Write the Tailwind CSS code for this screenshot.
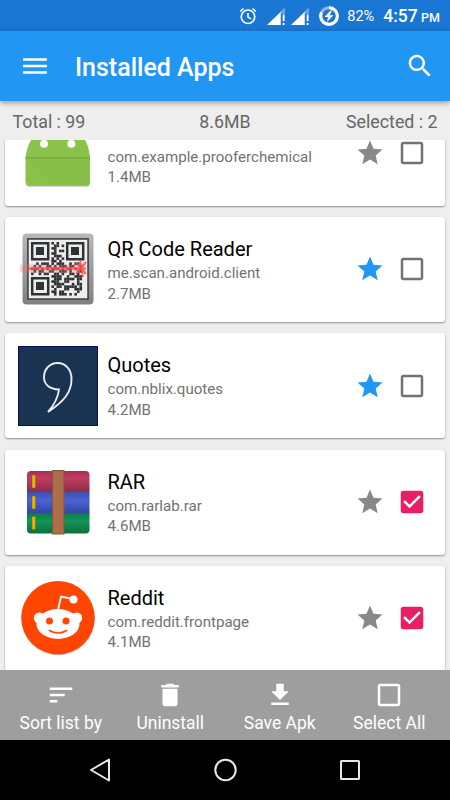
<!DOCTYPE html>
<html lang="en">
<head>
  <meta charset="UTF-8">
  <meta name="viewport" content="width=device-width, initial-scale=1.0">
  <script src="https://cdn.jsdelivr.net/npm/@tailwindcss/browser@4"></script>
  <title>Installed Apps</title>
</head>
<body class="font-['Roboto',sans-serif]">

  <!-- shared icons -->
  <svg class="hidden">
    <symbol id="star" viewBox="0 0 24 24"><path d="M12 17.27L18.18 21l-1.64-7.03L22 9.24l-7.19-.61L12 2 9.19 8.63 2 9.24l5.46 4.73L5.82 21z"/></symbol>
    <symbol id="box" viewBox="0 0 24 24"><path d="M19 5v14H5V5h14m0-2H5c-1.1 0-2 .9-2 2v14c0 1.1.9 2 2 2h14c1.100 0 2-.9 2-2V5c0-1.100-.9-2-2-2z"/></symbol>
    <symbol id="checked" viewBox="0 0 24 24"><path d="M19 3H5c-1.110 0-2 .9-2 2v14c0 1.100.89 2 2 2h14c1.110 0 2-.9 2-2V5c0-1.100-.89-2-2-2zm-9 14l-5-5 1.410-1.410L10 14.170l7.590-7.590L19 8l-9 9z"/></symbol>
    <symbol id="signal" viewBox="0 0 20 20"><path d="M19 0V7H14V5z" opacity=".35"/><path d="M14.500 5V19H0z"/><path d="M16.500 8h2v7h-2zM16.500 16.800h2v2.200h-2z"/></symbol>
  </svg>

  <main class="w-[450px] h-[800px] flex flex-col overflow-hidden bg-[#eeeeee]">

    <!-- status bar -->
    <div class="h-[31px] shrink-0 bg-[#1976d2] flex items-center justify-end pt-[1px] pr-[10px] text-white">
      <svg class="w-[18px] h-[18px] mr-[10px]" viewBox="0 0 24 24" fill="none" stroke="white" stroke-width="2.200"><circle cx="12" cy="13" r="9"/><path d="M12 8v5.500l4 2.300M1.500 6L6 2M22.500 6L18 2"/></svg>
      <svg class="w-[19px] h-[19px] mr-[5px] fill-white"><use href="#signal"/></svg>
      <svg class="w-[19px] h-[19px] mr-[9px] fill-white"><use href="#signal"/></svg>
      <svg class="w-[20px] h-[20px] mr-[8px]" viewBox="0 0 20 20" fill="none"><circle cx="10" cy="10" r="8.300" stroke="white" stroke-opacity=".5" stroke-width="3"/><path d="M10 1.700A8.300 8.300 0 1 1 2.500 6.500" stroke="white" stroke-width="3"/><path d="M11.500 4.500L5.500 11h3.500l-1 5 6.500-6.800h-3.800l2.300-4.700z" fill="white"/></svg>
      <span class="text-[14.500px] leading-none w-[36px] pt-[2px]">82%</span>
      <span class="text-[17.500px] leading-none font-medium whitespace-nowrap pt-[1px]">4:57 <span class="text-[12.500px] -ml-px">PM</span></span>
    </div>

    <!-- app bar -->
    <header class="relative z-10 h-[70px] shrink-0 bg-[#2196f3] shadow-[0_2px_5px_rgba(0,0,0,0.35)] flex items-center px-[20px]">
      <svg class="w-[30px] h-[30px] fill-white" viewBox="0 0 24 24"><path d="M2.500 18.200h19v-2h-19v2zm0-5.200h19v-2h-19v2zm0-7.200v2h19v-2z"/></svg>
      <h1 class="ml-[25px] pt-[3px] text-[25px] leading-none font-medium text-white flex-1">Installed Apps</h1>
      <svg class="w-[30px] h-[30px] -mr-[5px] fill-white" viewBox="0 0 24 24"><path d="M15.500 14h-.79l-.28-.27C15.410 12.590 16 11.110 16 9.500 16 5.910 13.090 3 9.500 3S3 5.910 3 9.500 5.910 16 9.500 16c1.610 0 3.090-.59 4.230-1.570l.27.28v.79l5 4.990L20.490 19l-4.990-5zm-6 0C7.010 14 5 11.990 5 9.500S7.010 5 9.500 5 14 7.010 14 9.500 11.990 14 9.500 14z"/></svg>
    </header>

    <!-- totals -->
    <div class="h-[39px] shrink-0 grid grid-cols-3 items-center px-[12.500px] pt-[3px] text-[17.800px] text-[#666666]">
      <span>Total : 99</span>
      <span class="text-center">8.6MB</span>
      <span class="text-right">Selected : 2</span>
    </div>

    <!-- app list -->
    <div class="flex-1 min-h-0 overflow-hidden px-[5px]">
      <div class="-mt-[39.400px] flex flex-col gap-[11.300px]">

        <div class="h-[105px] shrink-0 bg-white rounded-[3px] shadow-[0_1px_2px_rgba(0,0,0,0.4)] flex items-center pl-[12.500px] pr-[18px]">
          <svg class="w-[80px] h-[80px]" viewBox="0 0 80 80">
            <path d="M8 42v28q0 3.500 3 3.500h57.500q3 0 3-3.500V42z" fill="#aaa"/>
            <path d="M7.500 69V44Q9 34 13 27 22 10 40 10t27 17q4 7 5 17v25q0 3-3 3H10.500q-3 0-3-3z" fill="#8bc34a"/>
            <path d="M8 45L35 72H69q3 0 3-3V45z" fill="#82b846" opacity=".45"/>
            <path d="M7.500 44.300h64.500v1.200H7.500z" fill="#71a63b"/>
            <circle cx="26" cy="30.800" r="4" fill="#fff"/><circle cx="53.400" cy="30.800" r="4" fill="#fff"/>
          </svg>
          <div class="ml-[10px] pt-[1.400px] flex-1 text-[15.100px] leading-[20.600px] text-[#727272]">
            <h2 class="mb-[0.800px] text-[20px] leading-[26px] text-black">Proofer Chemical</h2>
            <p>com.example.prooferchemical</p>
            <p>1.4MB</p>
          </div>
          <svg class="w-[30px] h-[30px] fill-[#888888]"><use href="#star"/></svg>
          <svg class="w-[30px] h-[30px] ml-[12px] fill-[#727272]"><use href="#box"/></svg>
        </div>

        <div class="h-[105px] shrink-0 bg-white rounded-[3px] shadow-[0_1px_2px_rgba(0,0,0,0.4)] flex items-center pl-[12.500px] pr-[18px]">
          <svg class="w-[80px] h-[80px]" viewBox="0 0 80 80">
            <defs><linearGradient id="metal" x2="0" y2="1"><stop stop-color="#b8b8b8"/><stop offset="1" stop-color="#808080"/></linearGradient></defs>
            <rect x="4.500" y="4.500" width="71" height="71" rx="4" fill="url(#metal)"/>
            <rect x="9" y="9" width="62" height="62" fill="#4a4c4e"/>
            <rect x="10.800" y="10.800" width="58.400" height="58.400" fill="#eee"/>
            <g id="qr" fill="#2e3235"></g>
            <g fill="none" stroke="#2e3235" stroke-width="2.500">
              <path d="M14.200 14.200h16v16h-16zM49.200 14.200h16v16h-16zM14.200 49.200h16v16h-16z"/>
            </g>
            <path d="M18 18h8v8h-8zM53 18h8v8h-8zM18 53h8v8h-8z" fill="#2e3235"/>
            <path d="M2 39.500h66" stroke="#ff6b6b" stroke-width="8" opacity=".3"/>
            <path d="M10 39.500h58M62 31l3 17M58 34l10 11M58 45l10-12" stroke="#ff5050" stroke-width="2" opacity=".85"/>
          </svg>
          <div class="ml-[10px] pt-[1.400px] flex-1 text-[15.100px] leading-[20.600px] text-[#727272]">
            <h2 class="mb-[0.800px] text-[20px] leading-[26px] text-black">QR Code Reader</h2>
            <p>me.scan.android.client</p>
            <p>2.7MB</p>
          </div>
          <svg class="w-[30px] h-[30px] fill-[#2196f3]"><use href="#star"/></svg>
          <svg class="w-[30px] h-[30px] ml-[12px] fill-[#727272]"><use href="#box"/></svg>
        </div>

        <div class="h-[105px] shrink-0 bg-white rounded-[3px] shadow-[0_1px_2px_rgba(0,0,0,0.4)] flex items-center pl-[12.500px] pr-[18px]">
          <svg class="w-[80px] h-[80px]" viewBox="0 0 80 80">
            <rect x=".5" y=".5" width="79" height="79" fill="#1a3350" stroke="#0c0c50"/>
            <path d="M41 43.500C31 43 26 38 26 31c0-8 6-14 13.500-14 8.500 0 14 7 14 16 0 13-7 22-23.500 33C37 58 40 52 41 43.500z" fill="none" stroke="#e9edf1" stroke-width="1.900"/>
          </svg>
          <div class="ml-[10px] pt-[1.400px] flex-1 text-[15.100px] leading-[20.600px] text-[#727272]">
            <h2 class="mb-[0.800px] text-[20px] leading-[26px] text-black">Quotes</h2>
            <p>com.nblix.quotes</p>
            <p>4.2MB</p>
          </div>
          <svg class="w-[30px] h-[30px] fill-[#2196f3]"><use href="#star"/></svg>
          <svg class="w-[30px] h-[30px] ml-[12px] fill-[#727272]"><use href="#box"/></svg>
        </div>

        <div class="h-[105px] shrink-0 bg-white rounded-[3px] shadow-[0_1px_2px_rgba(0,0,0,0.4)] flex items-center pl-[12.500px] pr-[18px]">
          <svg class="w-[80px] h-[80px]" viewBox="0 0 80 80">
            <defs>
              <clipPath id="books"><rect x="9" y="9" width="62.500" height="62.500" rx="4"/></clipPath>
              <linearGradient id="red" x2="0" y2="1"><stop stop-color="#a53050"/><stop offset=".35" stop-color="#c23c62"/><stop offset="1" stop-color="#8d2b46"/></linearGradient>
              <linearGradient id="blue" x2="0" y2="1"><stop stop-color="#3d4fae"/><stop offset=".4" stop-color="#4a62d4"/><stop offset="1" stop-color="#3546a0"/></linearGradient>
              <linearGradient id="green" x2="0" y2="1"><stop stop-color="#0b7c46"/><stop offset=".4" stop-color="#119758"/><stop offset="1" stop-color="#0c6b3d"/></linearGradient>
              <pattern id="weave" width="2.400" height="2.400" patternUnits="userSpaceOnUse"><rect width="2.400" height="2.400" fill="#b97650"/><path d="M0 0l2.400 2.400M2.400 0L0 2.400" stroke="#96603f" stroke-width=".5"/></pattern>
            </defs>
            <g clip-path="url(#books)">
              <rect x="9" y="9" width="63" height="21" fill="url(#red)"/>
              <rect x="9" y="30" width="63" height="21" fill="url(#blue)"/>
              <rect x="9" y="51" width="63" height="21" fill="url(#green)"/>
            </g>
            <path d="M14 13h3.500v13H14zM14 34h3.500v13H14zM14 54.500h3.500v13H14z" fill="#e4b900" stroke="#7a5a20" stroke-width=".5"/>
            <rect x="34.500" y="8.500" width="11.500" height="63.500" fill="url(#weave)" stroke="#86553a"/>
          </svg>
          <div class="ml-[10px] pt-[1.400px] flex-1 text-[15.100px] leading-[20.600px] text-[#727272]">
            <h2 class="mb-[0.800px] text-[20px] leading-[26px] text-black">RAR</h2>
            <p>com.rarlab.rar</p>
            <p>4.6MB</p>
          </div>
          <svg class="w-[30px] h-[30px] fill-[#888888]"><use href="#star"/></svg>
          <svg class="w-[30px] h-[30px] ml-[12px] fill-[#e91e63]"><use href="#checked"/></svg>
        </div>

        <div class="h-[105px] shrink-0 bg-white rounded-[3px] shadow-[0_1px_2px_rgba(0,0,0,0.4)] flex items-center pl-[12.500px] pr-[18px]">
          <svg class="w-[80px] h-[80px]" viewBox="0 0 80 80">
            <circle cx="40" cy="40.300" r="37" fill="#ccc"/>
            <circle cx="40" cy="39.700" r="36.700" fill="#ff4500"/>
            <g fill="#fff">
              <ellipse cx="40" cy="46" rx="21.500" ry="15"/>
              <circle cx="21.300" cy="40" r="5.500"/><circle cx="58.700" cy="40" r="5.500"/>
              <circle cx="55.500" cy="21.500" r="4"/>
            </g>
            <path d="M40 32l3-13.500 12 2.500" fill="none" stroke="#fff" stroke-width="1.800"/>
            <circle cx="31.500" cy="43" r="3.500" fill="#ff4500"/><circle cx="48" cy="43" r="3.500" fill="#ff4500"/>
            <path d="M31.500 52.500q8.500 5 17 0" fill="none" stroke="#ff4500" stroke-width="1.700" stroke-linecap="round"/>
          </svg>
          <div class="ml-[10px] pt-[1.400px] flex-1 text-[15.100px] leading-[20.600px] text-[#727272]">
            <h2 class="mb-[0.800px] text-[20px] leading-[26px] text-black">Reddit</h2>
            <p>com.reddit.frontpage</p>
            <p>4.1MB</p>
          </div>
          <svg class="w-[30px] h-[30px] fill-[#888888]"><use href="#star"/></svg>
          <svg class="w-[30px] h-[30px] ml-[12px] fill-[#e91e63]"><use href="#checked"/></svg>
        </div>

      </div>
    </div>

    <!-- actions -->
    <div class="h-[70px] shrink-0 bg-[#9e9e9e] grid grid-cols-4 px-[6px] pt-[10px] text-white text-[17.500px] leading-[22px] text-center">
      <div class="flex flex-col items-center gap-[2px]">
        <svg class="w-[30px] h-[30px] fill-white" viewBox="0 0 24 24"><path d="M3 18h6v-2H3v2zM3 6v2h18V6H3zm0 7h12v-2H3v2z"/></svg>
        <span>Sort list by</span>
      </div>
      <div class="flex flex-col items-center gap-[2px]">
        <svg class="w-[30px] h-[30px] fill-white" viewBox="0 0 24 24"><path d="M6 19c0 1.100.9 2 2 2h8c1.100 0 2-.9 2-2V7H6v12zM19 4h-3.500l-1-1h-5l-1 1H5v2h14V4z"/></svg>
        <span>Uninstall</span>
      </div>
      <div class="flex flex-col items-center gap-[2px]">
        <svg class="w-[30px] h-[30px] fill-white" viewBox="0 0 24 24"><path d="M19 9h-4V3H9v6H5l7 7 7-7zM5 18v2h14v-2H5z"/></svg>
        <span>Save Apk</span>
      </div>
      <div class="flex flex-col items-center gap-[2px]">
        <svg class="w-[30px] h-[30px] fill-white"><use href="#box"/></svg>
        <span>Select All</span>
      </div>
    </div>

    <!-- navigation bar -->
    <div class="h-[60px] shrink-0 bg-black flex items-center justify-between px-[88px]">
      <svg class="w-[24px] h-[24px]" viewBox="0 0 24 24" fill="none" stroke="#e8e8e8" stroke-width="2" stroke-linejoin="round"><path d="M21 1.500v21L3 12z"/></svg>
      <svg class="w-[24px] h-[24px]" viewBox="0 0 24 24" fill="none" stroke="#e8e8e8" stroke-width="2"><circle cx="12.500" cy="12" r="10.200"/></svg>
      <svg class="w-[24px] h-[24px]" viewBox="0 0 24 24" fill="none" stroke="#e8e8e8" stroke-width="2"><rect x="3" y="3" width="18" height="18" rx=".5"/></svg>
    </div>
  </main>

  <script>
    // modules of the QR icon, one string per row
    const rows = [
      '........#.#..........',
      '.........##.#........',
      '........##...........',
      '.........#.##........',
      '........##...........',
      '.........###.........',
      '........#.#.#........',
      '........##.#.........',
      '..#.###.#.###..#.##..',
      '.#.#..##.#.###.##..#.',
      '###.#.#.###.#.##.#.#.',
      '.#.##..##..###.#..##.',
      '#..#.##..##.#..##.#..',
      '........####..#..###.',
      '.........###.####.##.',
      '........###..##...#..',
      '.........####...#.##.',
      '........#.##.#####.#.',
      '.........#...##..###.',
      '........##.##.....#..',
      '.........#.###.#.#...'
    ];
    const qr = document.getElementById('qr');
    rows.forEach((row, y) => {
      [...row].forEach((c, x) => {
        if (c !== '#') return;
        const r = document.createElementNS('http://www.w3.org/2000/svg', 'rect');
        r.setAttribute('x', 13 + x * 2.55);
        r.setAttribute('y', 13 + y * 2.55);
        r.setAttribute('width', 2.6);
        r.setAttribute('height', 2.6);
        qr.appendChild(r);
      });
    });
  </script>
</body>
</html>
